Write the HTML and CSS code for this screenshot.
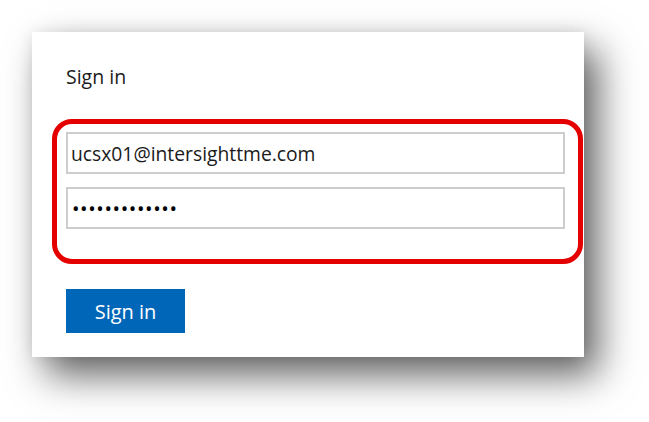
FILE: index.html
```html
<!DOCTYPE html>
<html lang="en">
<head>
<meta charset="utf-8">
<title>Sign in</title>
<link rel="stylesheet" href="styles.css">
</head>
<body>
<div class="page">
  <form class="card">
    <div class="title">Sign in</div>
    <div class="highlight">
      <input class="field" type="text" value="ucsx01@intersighttme.com" readonly>
      <input class="field password" type="password" value="abcdefghijklm" readonly>
    </div>
    <button class="btn" type="button">Sign in</button>
  </form>
</div>
</body>
</html>
```

FILE: styles.css
```css
html, body {
  margin: 0;
  padding: 0;
  background: #ffffff;
}
.page {
  width: 649px;
  height: 422px;
  padding: 32px 0 0 32px;
  box-sizing: border-box;
}
.card {
  width: 552px;
  height: 325px;
  box-sizing: border-box;
  background: #ffffff;
  padding: 33px 34px 24px 34px;
  display: flex;
  flex-direction: column;
  align-items: flex-start;
  box-shadow: 14px 18px 36px rgba(0, 0, 0, 0.62), 0 0 14px rgba(0, 0, 0, 0.08);
  font-family: "Open Sans", "Noto Sans", sans-serif;
}
.title {
  font-size: 19.5px;
  line-height: 24px;
  color: #1b1b1b;
}
.highlight {
  align-self: stretch;
  margin: 30px -33px 0 -14px;
  border: 5px solid #e50000;
  border-radius: 20px;
  padding: 8px 13px 30px 9px;
  display: flex;
  flex-direction: column;
  gap: 13px;
}
.field {
  display: block;
  width: 100%;
  height: 42px;
  box-sizing: border-box;
  margin: 0;
  border: 2px solid #cdcdcd;
  padding: 0 3px;
  font-family: "Open Sans", "Noto Sans", sans-serif;
  font-size: 19.3px;
  color: #1b1b1b;
  background: #ffffff;
  outline: none;
}
.password {
  letter-spacing: 0.6px;
  font-size: 20px;
  padding-left: 4px;
  color: #000000;
}
.btn {
  margin-top: 25px;
  width: 119px;
  height: 44px;
  border: 1px solid #0067b8;
  background: #0067b8;
  color: #ffffff;
  font-family: "Open Sans", "Noto Sans", sans-serif;
  font-size: 20px;
  padding: 0;
}
```
